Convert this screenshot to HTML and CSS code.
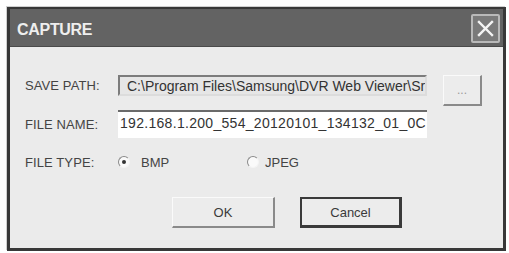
FILE: index.html
```html
<!DOCTYPE html>
<html>
<head>
<meta charset="utf-8">
<link rel="stylesheet" href="styles.css">
</head>
<body>
<div class="dialog">
  <div class="titlebar">
    <span class="title">CAPTURE</span>
    <button class="close" aria-label="Close">
      <svg width="17" height="17" viewBox="0 0 17 17"><path d="M2 2 L15 15 M15 2 L2 15" stroke="#f4f4f4" stroke-width="2.4" stroke-linecap="square"/></svg>
    </button>
  </div>
  <div class="content">
    <div class="form">
      <label class="lbl">SAVE PATH:</label>
      <div class="field readonly">C:\Program Files\Samsung\DVR Web Viewer\Sr</div>
      <button class="browse">...</button>

      <label class="lbl">FILE NAME:</label>
      <div class="field name">192.168.1.200_554_20120101_134132_01_0C</div>
      <span></span>

      <label class="lbl">FILE TYPE:</label>
      <div class="radios">
        <span class="radio bmp"><span class="dot checked"></span>BMP</span>
        <span class="radio jpeg"><span class="dot"></span>JPEG</span>
      </div>
      <span></span>
    </div>
    <div class="actions">
      <button class="btn ok">OK</button>
      <button class="btn cancel">Cancel</button>
    </div>
  </div>
</div>
</body>
</html>
```
FILE: styles.css
```css
html, body {
  margin: 0;
  padding: 0;
  background: #fff;
}
body {
  padding: 7px 0 0 7px;
  font-family: "Liberation Sans", Arial, sans-serif;
}
.dialog {
  width: 499px;
  height: 244px;
  box-sizing: border-box;
  border: 3px solid #383838;
  border-top-width: 2px;
  background: #ebebeb;
  display: flex;
  flex-direction: column;
  box-shadow: -1px -1px 0 #d0d0d0;
}
.titlebar {
  height: 37px;
  flex: none;
  background: #636363;
  display: flex;
  align-items: flex-start;
  justify-content: space-between;
  padding: 0 3px 0 7px;
  border-bottom: 1px solid #4a4a4a;
}
.title {
  color: #eeeeee;
  font-weight: bold;
  font-size: 16px;
  letter-spacing: -0.3px;
  margin-top: 12px;
}
.close {
  margin-top: 5px;
  width: 29px;
  height: 29px;
  box-sizing: border-box;
  padding: 0;
  border: 2px solid #b9b9b9;
  border-radius: 2px;
  background: #7a7a7a;
  display: flex;
  align-items: center;
  justify-content: center;
}
.content {
  flex: 1;
  padding: 28px 0 0 15px;
  display: flex;
  flex-direction: column;
}
.form {
  display: grid;
  grid-template-columns: 77px 309px 39px;
  grid-template-rows: 21px 28px 20px;
  column-gap: 16px;
  row-gap: 14px;
  align-items: center;
}
.lbl {
  font-size: 13px;
  color: #444;
  letter-spacing: 0.1px;
}
.field {
  height: 100%;
  box-sizing: border-box;
  font-size: 14px;
  color: #333;
  white-space: nowrap;
  overflow: hidden;
  display: flex;
  align-items: center;
}
.readonly {
  background: #e6e6e6;
  border: 2px solid #7c7c7c;
  border-right-color: #dcdcdc;
  border-bottom-color: #dcdcdc;
  padding-left: 7px;
}
.name {
  background: #fff;
  border-top: 2px solid #6a6a6a;
  padding: 0 0 4px 2px;
  letter-spacing: 0.3px;
}
.browse {
  align-self: start;
  height: 31px;
  box-sizing: border-box;
  padding: 0;
  background: #ececec;
  border: 1px solid #fafafa;
  border-right: 2px solid #8a8a8a;
  border-bottom: 2px solid #8a8a8a;
  color: #9a9a9a;
  font-size: 12px;
  font-family: "Liberation Sans", Arial, sans-serif;
}
.radios {
  display: flex;
  align-items: center;
  font-size: 13px;
  color: #444;
}
.radio {
  display: flex;
  align-items: center;
}
.bmp {
  width: 129px;
}
.bmp .dot {
  margin-right: 11px;
}
.jpeg .dot {
  margin-right: 6px;
}
.dot {
  width: 12px;
  height: 12px;
  box-sizing: border-box;
  border-radius: 50%;
  background: #fafafa;
  border: 1px solid;
  border-color: #8a8a8a #f4f4f4 #f4f4f4 #8a8a8a;
  position: relative;
}
.dot.checked::after {
  content: "";
  position: absolute;
  left: 3px;
  top: 3px;
  width: 4px;
  height: 4px;
  border-radius: 50%;
  background: #333;
}
.actions {
  display: flex;
  gap: 25px;
  padding-left: 147px;
  margin-top: 25px;
}
.btn {
  height: 31px;
  width: 103px;
  box-sizing: border-box;
  font-family: "Liberation Sans", Arial, sans-serif;
  font-size: 13px;
  color: #3a3a3a;
  background: #ececec;
  padding: 0;
}
.ok {
  border: 1px solid #fafafa;
  border-right: 2px solid #8a8a8a;
  border-bottom: 2px solid #8a8a8a;
}
.cancel {
  width: 102px;
  border: 2px solid #3a3a3a;
  border-bottom-width: 3px;
  border-right-width: 3px;
}
```
